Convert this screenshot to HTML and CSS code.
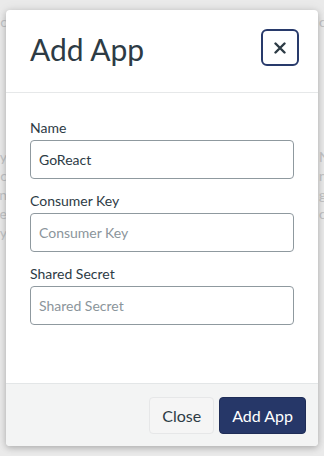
FILE: index.html
```html
<!DOCTYPE html>
<html lang="en">
<head>
<meta charset="utf-8">
<title>Add App</title>
<link rel="stylesheet" href="styles.css">
</head>
<body>
  <div class="page">
    <div class="bg-col bg-left">
      <div class="bg-line">ic</div>
      <div class="bg-group">
        <div class="bg-line">Copy</div>
        <div class="bg-line">ic</div>
        <div class="bg-line">in</div>
        <div class="bg-line">Re</div>
        <div class="bg-line">ly</div>
      </div>
    </div>
    <div class="bg-col bg-right">
      <div class="bg-line">c</div>
      <div class="bg-group">
        <div class="bg-line">Name</div>
        <div class="bg-line">no</div>
        <div class="bg-line">go</div>
        <div class="bg-line">co</div>
      </div>
    </div>
  </div>

  <div class="modal" role="dialog" aria-labelledby="modal-title">
    <div class="modal-header">
      <h2 class="modal-title" id="modal-title">Add App</h2>
      <button class="close-x" type="button" aria-label="Close">
        <svg width="12" height="12" viewBox="0 0 12 12" aria-hidden="true">
          <path d="M1.5 1.5 L10.5 10.5 M10.5 1.5 L1.5 10.5" stroke="#2d3b45" stroke-width="2.4" stroke-linecap="round" fill="none"/>
        </svg>
      </button>
    </div>
    <div class="modal-body">
      <div class="field">
        <label class="field-label" for="name">Name</label>
        <input class="field-input" id="name" type="text" value="GoReact">
      </div>
      <div class="field">
        <label class="field-label" for="key">Consumer Key</label>
        <input class="field-input" id="key" type="text" placeholder="Consumer Key">
      </div>
      <div class="field">
        <label class="field-label" for="secret">Shared Secret</label>
        <input class="field-input" id="secret" type="text" placeholder="Shared Secret">
      </div>
    </div>
    <div class="modal-footer">
      <button class="btn btn-light" type="button">Close</button>
      <button class="btn btn-primary" type="button">Add App</button>
    </div>
  </div>
</body>
</html>
```

FILE: styles.css
```css
* { box-sizing: border-box; }

html, body {
  margin: 0;
  padding: 0;
  height: 100%;
}

body {
  font-family: Lato, "Noto Sans", "Liberation Sans", sans-serif;
  background: #eaeaea;
  color: #2d3b45;
  overflow: hidden;
  position: relative;
}

/* faint page behind the modal */
.page {
  display: flex;
  justify-content: space-between;
  height: 100%;
  font-size: 14px;
  line-height: 19px;
  color: #c2c4c6;
}

.bg-col {
  white-space: nowrap;
  padding-top: 12px;
}

.bg-left {
  width: 40px;
  margin-left: -33px;
  text-align: right;
}

.bg-right {
  width: 40px;
  margin-right: -35px;
  text-align: left;
}

.bg-group {
  margin-top: 116px;
}

/* modal */
.modal {
  position: absolute;
  left: 6px;
  top: 10px;
  width: 312px;
  height: 436px;
  background: #fff;
  border-radius: 4px;
  box-shadow: 0 2px 6px rgba(0, 0, 0, 0.22), 0 0 12px rgba(0, 0, 0, 0.08);
  display: flex;
  flex-direction: column;
  overflow: hidden;
}

.modal-header {
  height: 83px;
  flex: none;
  display: flex;
  justify-content: space-between;
  align-items: flex-start;
  padding: 19px 19px 0 24px;
  border-bottom: 1px solid #e6e8e9;
}

.modal-title {
  margin: 2px 0 0;
  font-size: 30px;
  line-height: 36px;
  font-weight: 400;
  color: #2d3b45;
}

.close-x {
  width: 38px;
  height: 37px;
  padding: 0;
  border: 2px solid #283a6b;
  border-radius: 6px;
  background: #fff;
  display: flex;
  align-items: center;
  justify-content: center;
  cursor: pointer;
}

.modal-body {
  flex: 1;
  padding: 25px 24px 0 24px;
}

.field {
  display: flex;
  flex-direction: column;
  margin-bottom: 12px;
}

.field-label {
  font-size: 14px;
  line-height: 20px;
  margin-bottom: 2px;
  color: #2d3b45;
}

.field-input {
  height: 39px;
  width: 100%;
  border: 1px solid #8f999f;
  border-radius: 4px;
  padding: 0 8px;
  font-family: inherit;
  font-size: 14px;
  color: #2d3b45;
  background: #fff;
  outline: none;
}

.field-input::placeholder {
  color: #8b959b;
  opacity: 1;
}

.modal-footer {
  flex: none;
  height: 63px;
  background: #f3f4f4;
  border-top: 1px solid #e3e6e7;
  display: flex;
  justify-content: flex-end;
  align-items: center;
  gap: 5px;
  padding: 0 12px;
}

.btn {
  height: 37px;
  padding: 0 12px;
  font-family: inherit;
  font-size: 16px;
  border-radius: 4px;
  cursor: pointer;
}

.btn-light {
  background: #f5f5f5;
  border: 1px solid #e6e7e8;
  color: #2d3b45;
}

.btn-primary {
  background: #263768;
  border: 1px solid #1f2d57;
  color: #fff;
}
```
